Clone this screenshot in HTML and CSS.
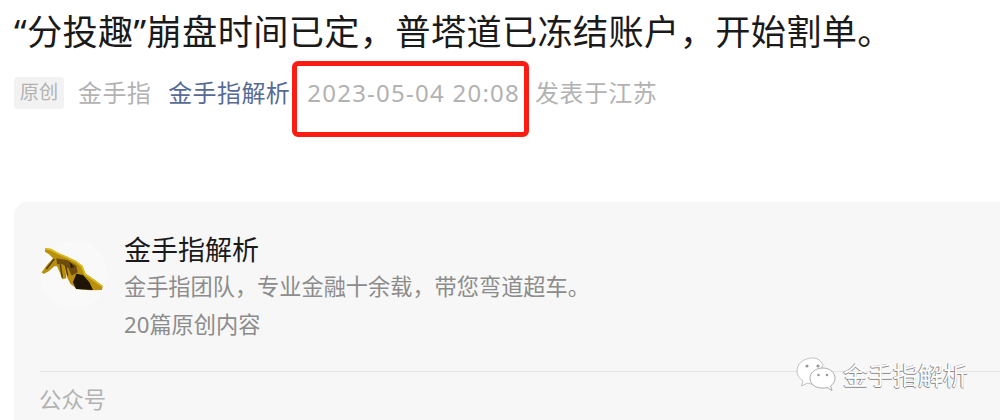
FILE: index.html
```html
<!DOCTYPE html>
<html lang="zh">
<head>
<meta charset="utf-8">
<title>分投趣</title>
<link rel="stylesheet" href="styles.css">
</head>
<body>
<main class="page">
  <h1 class="title">“分投趣”崩盘时间已定，普塔道已冻结账户，开始割单。</h1>
  <div class="meta">
    <span class="badge">原创</span>
    <span class="author">金手指</span>
    <span class="account">金手指解析</span>
    <span class="date">2023-05-04 20:08</span>
    <span class="place">发表于江苏</span>
  </div>
  <section class="card">
    <div class="profile">
      <div class="avatar">
        <svg viewBox="57 48 204 204" width="68" height="68" aria-hidden="true">
          <path d="M72 70 L90 72 L112 84 L140 96 L165 108 L184 122 L194 146 L222 165 L245 183 L243 195 L205 196 L168 192 L148 176 L138 156 L134 134 L136 160 L124 163 L116 142 L108 124 L100 124 L84 138 L68 147 L62 142 L78 120 L96 100 L84 88 L72 80 Z" fill="#b8900e"/>
          <path d="M72 71 L90 74 L112 86 L140 98 L165 110 L182 124 L192 148 L220 167 L244 184" fill="none" stroke="#dcbc1e" stroke-width="5"/>
          <path d="M165 192 L156 172 L166 146 L186 150 L205 172 L216 195 Z" fill="#1f1405"/>
          <path d="M106 100 L140 106 L166 122 L170 142 L152 152 L142 130 L124 118 L108 118 Z" fill="#6e4c0e"/>
          <path d="M118 118 L124 158 M134 122 L140 152 M100 102 L76 132" stroke="#4f3608" stroke-width="4" fill="none"/>
          <path d="M146 112 L160 126 L150 130 Z" fill="#2e1e05"/>
        </svg>
      </div>
      <div class="info">
        <div class="name">金手指解析</div>
        <div class="desc">金手指团队，专业金融十余载，带您弯道超车。</div>
        <div class="count">20篇原创内容</div>
      </div>
    </div>
    <div class="source">公众号</div>
  </section>
</main>
<div class="highlight"></div>
<div class="watermark">
  <svg viewBox="0 0 42 38" width="42" height="38" aria-hidden="true">
    <path d="M18 3 C8 3 2 9 2 16 C2 20 4 23 8 26 L6.500 31 L12.500 28 C15 29 17 29 19 29 L28 10 C26 6 23 3 18 3 Z" fill="#fff" stroke="#a8a8a8" stroke-width=".7"/>
    <path d="M28 13 C20 13 15 18 15 23 C15 29 20 33 27 33 C29 33 30 33 32 32.500 L37 35.500 L35.500 31 C38.500 29 40 26 40 23 C40 18 35 13 28 13 Z" fill="#fff" stroke="#8a8a8a" stroke-width=".7"/>
    <circle cx="12" cy="11" r="1.600" fill="#9a9a9a"/>
    <circle cx="23" cy="11" r="1.600" fill="#9a9a9a"/>
    <circle cx="23.500" cy="20" r="1.300" fill="#9a9a9a"/>
    <circle cx="32" cy="20" r="1.300" fill="#9a9a9a"/>
  </svg>
  <span class="mark-text">金手指解析</span>
</div>
</body>
</html>
```
FILE: styles.css
```css
* { box-sizing: border-box; }
html, body { margin: 0; height: 100%; }
body {
  background: #fff;
  overflow: hidden;
  position: relative;
  font-family: "Noto Sans", "Noto Sans CJK SC", sans-serif;
}
.page { height: 420px; overflow: hidden; padding: 8px 0 0 14px; }
.title {
  margin: 0;
  font-size: 35.200px;
  font-weight: 400;
  line-height: 46px;
  letter-spacing: .35px;
  color: #1a1a1a;
  white-space: nowrap;
}
.meta {
  display: flex;
  align-items: center;
  margin-top: 23px;
  height: 32px;
  font-size: 24px;
  line-height: 32px;
  letter-spacing: .4px;
  color: #b2b2b2;
  white-space: nowrap;
}
.badge {
  width: 50px;
  height: 32px;
  border-radius: 4px;
  background: #f2f2f2;
  color: #b2b2b2;
  font-size: 19.200px;
  letter-spacing: 0;
  line-height: 30px;
  text-align: center;
  margin-right: 14px;
}
.author { margin-right: 17px; }
.account { color: #576b95; margin-right: 17px; }
.date { font-size: 24px; letter-spacing: 1.250px; margin-right: 15px; }
.card {
  margin-top: 93px;
  height: 240px;
  background: #f7f7f7;
  border-radius: 14px 0 0 14px;
  padding: 28px 0 0 26px;
}
.profile {
  display: flex;
  border-bottom: 1px solid #e5e5e5;
  height: 142px;
}
.avatar {
  width: 68px;
  height: 68px;
  margin-top: 11px;
  border-radius: 50%;
  background: #f9f9f9;
  margin-right: 16px;
  flex: none;
}
.avatar svg { display: block; }
.info { display: flex; flex-direction: column; }
.name { font-size: 27px; line-height: 36px; color: #1a1a1a; margin-top: 2px; }
.desc { font-size: 22.200px; line-height: 32px; color: #8c8c8c; margin-top: 3px; white-space: nowrap; }
.count { font-size: 22.200px; line-height: 32px; color: #8c8c8c; margin-top: 6px; }
.source { font-size: 22.400px; line-height: 32px; color: #b2b2b2; margin-top: 12px; margin-left: -1px; }
.highlight {
  position: absolute;
  left: 292px;
  top: 61px;
  width: 237px;
  height: 76px;
  border: 5px solid #fb1d12;
  border-radius: 6px;
}
.watermark {
  position: absolute;
  left: 795px;
  top: 355px;
  display: flex;
  align-items: center;
  gap: 6px;
}
.mark-text {
  font-size: 25px;
  color: #fff;
  text-shadow: -1px 0 0 #888, 0 1px 0 #888;
  white-space: nowrap;
}
```
